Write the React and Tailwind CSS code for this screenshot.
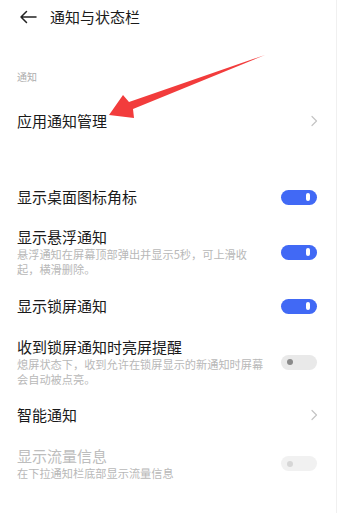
import React from "react";

const font = { fontFamily: '"Noto Sans CJK SC", "Noto Sans", sans-serif' };

function Toggle({ state }) {
  if (state === "on") {
    return (
      <div className="w-[36px] h-[15px] rounded-full bg-[#4169f5] flex items-center justify-end pr-[7px] shrink-0">
        <div className="w-[4px] h-[8px] rounded-full bg-white" />
      </div>
    );
  }
  if (state === "off") {
    return (
      <div className="w-[36px] h-[15px] rounded-full bg-[#e9e9e9] flex items-center pl-[6px] shrink-0">
        <div className="w-[6px] h-[6px] rounded-full bg-[#8a8a8a]" />
      </div>
    );
  }
  return (
    <div className="w-[36px] h-[15px] rounded-full bg-[#f1f1f1] flex items-center pl-[6px] shrink-0">
      <div className="w-[6px] h-[6px] rounded-full bg-[#d6d6d6]" />
    </div>
  );
}

function Chevron() {
  return (
    <svg width="8" height="12" viewBox="0 0 8 12" className="shrink-0 -mr-[1px]">
      <path d="M2 1.5 L6.5 6 L2 10.5" fill="none" stroke="#c4c4c4" strokeWidth="1.2" strokeLinecap="round" strokeLinejoin="round" />
    </svg>
  );
}

function Row({ title, desc, right, mt, disabled }) {
  return (
    <div className={`flex items-center justify-between ${mt}`}>
      <div className="flex flex-col">
        <div className={`text-[15px] leading-[20px] ${disabled ? "text-[#bdbdbd]" : "text-[#1a1a1a]"}`}>{title}</div>
        {desc && (
          <div className="w-[250px] text-[11.2px] leading-[15px] text-[#b8b8b8]">{desc}</div>
        )}
      </div>
      {right}
    </div>
  );
}

export default function App() {
  return (
    <div className="relative w-[338px] h-[513px] bg-white overflow-hidden" style={font}>
      <div className="w-[337px] h-full border-r border-[#f0f0f0] flex flex-col">
        <div className="h-[34px] flex items-center pl-[19px]">
          <svg width="18" height="14" viewBox="0 0 18 14">
            <path d="M17 7 H2 M7.5 1.5 L2 7 L7.5 12.5" fill="none" stroke="#222" strokeWidth="1.5" strokeLinecap="round" strokeLinejoin="round" />
          </svg>
          <span className="ml-[13px] text-[15px] text-[#1a1a1a] leading-[20px]">通知与状态栏</span>
        </div>
        <div className="pl-[17px] pr-[19px] flex flex-col">
          <div className="mt-[36px] text-[10px] leading-[14px] text-[#adadad]">通知</div>
          <Row mt="mt-[27px]" title="应用通知管理" right={<Chevron />} />
          <Row mt="mt-[56px]" title="显示桌面图标角标" right={<Toggle state="on" />} />
          <Row mt="mt-[20px]" title="显示悬浮通知" desc="悬浮通知在屏幕顶部弹出并显示5秒，可上滑收起，横滑删除。" right={<Toggle state="on" />} />
          <Row mt="mt-[19px]" title="显示锁屏通知" right={<Toggle state="on" />} />
          <Row mt="mt-[21px]" title="收到锁屏通知时亮屏提醒" desc="熄屏状态下，收到允许在锁屏显示的新通知时屏幕会自动被点亮。" right={<Toggle state="off" />} />
          <Row mt="mt-[18px]" title="智能通知" right={<Chevron />} />
          <Row mt="mt-[21px]" title="显示流量信息" desc="在下拉通知栏底部显示流量信息" disabled right={<Toggle state="disabled" />} />
        </div>
      </div>
      <svg className="absolute left-0 top-0 pointer-events-none" width="338" height="513" viewBox="0 0 338 513">
        <polygon points="109,115 123,95 129,102 265,55 133,109 134,118" fill="#f23c3c" />
      </svg>
    </div>
  );
}
